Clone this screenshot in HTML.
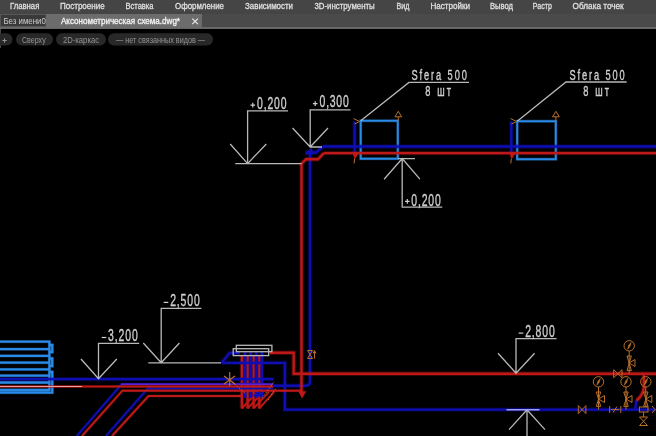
<!DOCTYPE html>
<html><head><meta charset="utf-8">
<style>
html,body{margin:0;padding:0;background:#000;width:656px;height:436px;overflow:hidden}
svg{position:absolute;left:0;top:0;display:block;will-change:transform}
text{font-family:"Liberation Sans",sans-serif}
</style></head><body>
<svg width="656" height="436" viewBox="0 0 656 436">
<rect x="0" y="0" width="656" height="436" fill="#000"/>
<rect x="0" y="0" width="656" height="14" fill="#454545"/>
<text stroke="#e0e0e0" stroke-width="0.3" x="10" y="9.0" font-size="9.6" fill="#e0e0e0" textLength="29.3" lengthAdjust="spacingAndGlyphs">Главная</text>
<text stroke="#e0e0e0" stroke-width="0.3" x="60" y="9.0" font-size="9.6" fill="#e0e0e0" textLength="44.6" lengthAdjust="spacingAndGlyphs">Построение</text>
<text stroke="#e0e0e0" stroke-width="0.3" x="125.5" y="9.0" font-size="9.6" fill="#e0e0e0" textLength="28.0" lengthAdjust="spacingAndGlyphs">Вставка</text>
<text stroke="#e0e0e0" stroke-width="0.3" x="175" y="9.0" font-size="9.6" fill="#e0e0e0" textLength="49.0" lengthAdjust="spacingAndGlyphs">Оформление</text>
<text stroke="#e0e0e0" stroke-width="0.3" x="245" y="9.0" font-size="9.6" fill="#e0e0e0" textLength="48.0" lengthAdjust="spacingAndGlyphs">Зависимости</text>
<text stroke="#e0e0e0" stroke-width="0.3" x="314.5" y="9.0" font-size="9.6" fill="#e0e0e0" textLength="60.2" lengthAdjust="spacingAndGlyphs">3D-инструменты</text>
<text stroke="#e0e0e0" stroke-width="0.3" x="396.6" y="9.0" font-size="9.6" fill="#e0e0e0" textLength="12.8" lengthAdjust="spacingAndGlyphs">Вид</text>
<text stroke="#e0e0e0" stroke-width="0.3" x="430.4" y="9.0" font-size="9.6" fill="#e0e0e0" textLength="39.6" lengthAdjust="spacingAndGlyphs">Настройки</text>
<text stroke="#e0e0e0" stroke-width="0.3" x="490" y="9.0" font-size="9.6" fill="#e0e0e0" textLength="23.0" lengthAdjust="spacingAndGlyphs">Вывод</text>
<text stroke="#e0e0e0" stroke-width="0.3" x="532.8" y="9.0" font-size="9.6" fill="#e0e0e0" textLength="19.0" lengthAdjust="spacingAndGlyphs">Растр</text>
<text stroke="#e0e0e0" stroke-width="0.3" x="572.6" y="9.0" font-size="9.6" fill="#e0e0e0" textLength="51.1" lengthAdjust="spacingAndGlyphs">Облака точек</text>
<rect x="0" y="14" width="656" height="14" fill="#4a4a4a"/>
<rect x="0.5" y="14.5" width="45.5" height="12" fill="#3a3a3a" stroke="#575757" stroke-width="1"/>
<rect x="46" y="14" width="156" height="13.2" fill="#6c6c6c"/>
<rect x="0" y="27.2" width="656" height="1.7" fill="#727272"/>
<text x="3.4" y="24.1" font-size="8.4" fill="#cccccc" textLength="42.4" lengthAdjust="spacingAndGlyphs">Без имени0</text>
<text stroke="#f0f0f0" stroke-width="0.35" x="61" y="24.2" font-size="8.5" fill="#f0f0f0" textLength="119.0" lengthAdjust="spacingAndGlyphs">Аксонометрическая схема.dwg*</text>
<path d="M192.3 18.6 L197.9 24.2 M197.9 18.6 L192.3 24.2" stroke="#e8e8e8" stroke-width="1.2" fill="none"/>
<rect x="0" y="29" width="1" height="19" fill="#484848"/>
<rect x="-8" y="33.3" width="20.5" height="12.2" rx="6.1" fill="#282828"/>
<rect x="16" y="33.3" width="37" height="12.2" rx="6.1" fill="#282828"/>
<rect x="56" y="33.3" width="50" height="12.2" rx="6.1" fill="#282828"/>
<rect x="108" y="33.3" width="105" height="12.2" rx="6.1" fill="#282828"/>
<path d="M2.3 40.5 H6.7 M4.5 38.3 V42.7" stroke="#9a9a9a" stroke-width="0.9" fill="none"/>
<text x="22" y="42.6" font-size="9" fill="#949494" textLength="23.7" lengthAdjust="spacingAndGlyphs">Сверху</text>
<text x="63" y="42.6" font-size="9" fill="#949494" textLength="36.0" lengthAdjust="spacingAndGlyphs">2D-каркас</text>
<text x="116" y="42.6" font-size="9" fill="#949494" textLength="89.0" lengthAdjust="spacingAndGlyphs">— нет связанных видов —</text>
<g>
<path d="M0 341.7 H49.4 M0 349.2 H49.4 M0 355.9 H49.4 M0 362.6 H49.4 M0 369.3 H49.4 M0 375.6 H49.4 M0 382.5 H49.4 M0 390 H49.4 M49.4 340.6 V391.1 M49.4 345 H52.3 V352 H49.4 M49.4 358.5 H52.3 V366 H49.4 M49.4 372 H52.3 V392.6 H0" stroke="#2a8ae8" stroke-opacity="0.25" stroke-width="3.3" fill="none"/><path d="M0 341.7 H49.4 M0 349.2 H49.4 M0 355.9 H49.4 M0 362.6 H49.4 M0 369.3 H49.4 M0 375.6 H49.4 M0 382.5 H49.4 M0 390 H49.4 M49.4 340.6 V391.1 M49.4 345 H52.3 V352 H49.4 M49.4 358.5 H52.3 V366 H49.4 M49.4 372 H52.3 V392.6 H0" stroke="#2a8ae8" stroke-width="2.3" fill="none"/>
<path d="M360.7 120.8 H397.8 V158.7 H360.7 Z M517.2 121.2 H555.8 V159.2 H517.2 Z" stroke="#2a8ae8" stroke-opacity="0.25" stroke-width="3.2" fill="none"/><path d="M360.7 120.8 H397.8 V158.7 H360.7 Z M517.2 121.2 H555.8 V159.2 H517.2 Z" stroke="#2a8ae8" stroke-width="2" fill="none"/>
<path d="M241.9 355 V408.4 M247.6 355 V408.4 M253.6 355 V408.4 M259.3 355 V408.4" stroke="#bf1818" stroke-opacity="0.3" stroke-width="4.4" fill="none"/><path d="M241.9 355 V408.4 M247.6 355 V408.4 M253.6 355 V408.4 M259.3 355 V408.4" stroke="#bf1818" stroke-width="2.4" fill="none"/>
<path d="M241.9 408.4 L257 392 M247.6 408.4 L263 392 M253.6 408.4 L269 392 M259.3 408.4 L274 392" stroke="#bf1818" stroke-opacity="0.25" stroke-width="2.8" fill="none"/><path d="M241.9 408.4 L257 392 M247.6 408.4 L263 392 M253.6 408.4 L269 392 M259.3 408.4 L274 392" stroke="#bf1818" stroke-width="1.8" fill="none"/>
<path d="M0 379.1 H273.5 M323 146.5 H656 M305.5 152.5 H316 L323 146.5 M310 152.5 V381.5 Q310 385.7 305 385.7 H273 M221.4 362.9 L229.7 353 H240 M221.4 362.9 H284.8 V409.6 H656 M354.6 121.5 V153 M511.3 121.5 V153 M245 351 V398 M250.7 351 V398 M256.3 351 V398 M262 351 V398 M636.3 400 L635.5 409.6" stroke="#0e0eb4" stroke-opacity="0.3" stroke-width="4.4" fill="none"/><path d="M0 379.1 H273.5 M323 146.5 H656 M305.5 152.5 H316 L323 146.5 M310 152.5 V381.5 Q310 385.7 305 385.7 H273 M221.4 362.9 L229.7 353 H240 M221.4 362.9 H284.8 V409.6 H656 M354.6 121.5 V153 M511.3 121.5 V153 M245 351 V398 M250.7 351 V398 M256.3 351 V398 M262 351 V398 M636.3 400 L635.5 409.6" stroke="#0e0eb4" stroke-width="2.4" fill="none"/>
<path d="M76.8 436 L121.7 384 H273 M106 436 L147.7 388.6 H273" stroke="#0e0eb4" stroke-opacity="0.25" stroke-width="3.2" fill="none"/><path d="M76.8 436 L121.7 384 H273 M106 436 L147.7 388.6 H273" stroke="#0e0eb4" stroke-width="2.0" fill="none"/>
<path d="M323.8 153.1 H656 M323.8 153.1 L318 159.3 H306 L301.5 163.7 V392 M270 352.8 H293.7 V373.7 H656 M643.8 373.7 V388 Q643 395 636.5 400.5" stroke="#bf1818" stroke-opacity="0.3" stroke-width="4.4" fill="none"/><path d="M323.8 153.1 H656 M323.8 153.1 L318 159.3 H306 L301.5 163.7 V392 M270 352.8 H293.7 V373.7 H656 M643.8 373.7 V388 Q643 395 636.5 400.5" stroke="#bf1818" stroke-width="2.4" fill="none"/>
<path d="M0 386.5 H273 M82 436 L122.4 390.7 H301.5 M112 436 L148.5 396 H241.4" stroke="#bf1818" stroke-opacity="0.25" stroke-width="3.2" fill="none"/><path d="M0 386.5 H273 M82 436 L122.4 390.7 H301.5 M112 436 L148.5 396 H241.4" stroke="#bf1818" stroke-width="2.0" fill="none"/>
<path d="M298.3 391.3 H306.3 L302 398.5 Z M352.5 152 H359.5 L354.6 159.8 Z M509.3 152 H516.3 L511.3 159.8 Z" fill="#bf1818"/>
<path d="M304.5 154.5 L311.5 147.5 L314 154.5 Z M252 396 L260 391 L262 397 Z" fill="#0e0eb4"/>
<path d="M121 384.3 H273" stroke="#6a20c8" stroke-width="1.6" fill="none"/>
<path d="M0 386.5 H82" stroke="#f4b0b0" stroke-width="0.9" fill="none"/>
<g stroke="#b8b8b8" stroke-width="1.3" fill="none"><path d="M81 359 L98.5 378.8 L116.8 359 M98.5 378.8 V343.4 H139.2"/><path d="M143.3 343 L161.2 362.8 L179.4 343 M161.2 362.8 V308.3 H201.4 M148.3 362.8 H221"/><path d="M230.2 144 L247.6 163.6 L266.3 144 M247.6 163.6 V110.8 H288 M235.3 163.6 H301.5"/><path d="M292.5 128 L310.2 147 L328 128 M310.2 147 V109.9 H350.6 M310.2 147 H322"/><path d="M384.1 179.2 L402.2 158.6 L419.9 179.2 M402.2 158.6 V207.2 H442.3 M398 158.6 H415"/><path d="M498 353.2 L516 373.2 L534.6 353.2 M516 373.2 V338.7 H556.6"/><path d="M509 429.6 L527 409.7 L545 429.6 M527 409.7 V436"/><path d="M360.7 120.8 L408.9 82.4 H469"/><path d="M517.2 121.2 L566 82 H626.6"/><rect x="236.3" y="345.3" width="35.6" height="6.4"/><rect x="233.2" y="348.7" width="35.5" height="6.9"/></g>
<path d="M506.5 409.7 H539.5" stroke="#a0a0f0" stroke-width="1.5" fill="none"/>
<g transform="translate(256.99,109) scale(0.64,1)"><text x="0" y="0" font-size="16.3" letter-spacing="1.371" fill="#d0d0d0" stroke="#d0d0d0" stroke-width="0.35">0,200</text></g>
<path d="M250.5 105.1 H255.10000000000002 M252.8 102.8 V107.39999999999999" stroke="#d0d0d0" stroke-width="1.2" fill="none"/>
<g transform="translate(319.59,107.4) scale(0.64,1)"><text x="0" y="0" font-size="16.3" letter-spacing="1.176" fill="#d0d0d0" stroke="#d0d0d0" stroke-width="0.35">0,300</text></g>
<path d="M312.9 103.6 H317.5 M315.2 101.3 V105.89999999999999" stroke="#d0d0d0" stroke-width="1.2" fill="none"/>
<g transform="translate(411.29,205.8) scale(0.64,1)"><text x="0" y="0" font-size="16.3" letter-spacing="1.293" fill="#d0d0d0" stroke="#d0d0d0" stroke-width="0.35">0,200</text></g>
<path d="M405.0 201.4 H409.6 M407.3 199.1 V203.70000000000002" stroke="#d0d0d0" stroke-width="1.2" fill="none"/>
<g transform="translate(108.00,341.4) scale(0.64,1)"><text x="0" y="0" font-size="16.3" letter-spacing="1.406" fill="#d0d0d0" stroke="#d0d0d0" stroke-width="0.35">3,200</text></g>
<path d="M101.7 337.5 H106.3" stroke="#d0d0d0" stroke-width="1.2" fill="none"/>
<g transform="translate(170.18,306.1) scale(0.64,1)"><text x="0" y="0" font-size="16.3" letter-spacing="1.339" fill="#d0d0d0" stroke="#d0d0d0" stroke-width="0.35">2,500</text></g>
<path d="M163.7 302.4 H168.3" stroke="#d0d0d0" stroke-width="1.2" fill="none"/>
<g transform="translate(525.18,336.8) scale(0.64,1)"><text x="0" y="0" font-size="16.3" letter-spacing="1.339" fill="#d0d0d0" stroke="#d0d0d0" stroke-width="0.35">2,800</text></g>
<path d="M518.7 333.1 H523.3" stroke="#d0d0d0" stroke-width="1.2" fill="none"/>
<g transform="translate(411.48,79.7) scale(0.66,1)"><text x="0" y="0" font-size="14" letter-spacing="2.900" fill="#d0d0d0" stroke="#d0d0d0" stroke-width="0.35">Sfera 500</text></g>
<g transform="translate(425.20,95.8) scale(0.66,1)"><text x="0" y="0" font-size="14" letter-spacing="3.287" fill="#d0d0d0" stroke="#d0d0d0" stroke-width="0.35">8 шт</text></g>
<g transform="translate(569.38,79.7) scale(0.66,1)"><text x="0" y="0" font-size="14" letter-spacing="2.900" fill="#d0d0d0" stroke="#d0d0d0" stroke-width="0.35">Sfera 500</text></g>
<g transform="translate(583.20,95.8) scale(0.66,1)"><text x="0" y="0" font-size="14" letter-spacing="3.287" fill="#d0d0d0" stroke="#d0d0d0" stroke-width="0.35">8 шт</text></g>
<g stroke="#b8702a" stroke-width="1" fill="none"><path d="M394.9 116.8 L398.3 111.3 L401.7 116.8 Z M398.3 116.8 V120.8"/><path d="M552.5 116.8 L555.9 111.3 L559.3 116.8 Z M555.9 116.8 V121.2"/><path d="M353.5 118.5 L359.5 121.5 L354.5 124 M354.6 159 L354 163.5"/><path d="M510.5 118.5 L516.5 121.5 L511.5 124 M511.3 159 L510.8 163.5"/><circle cx="629.2" cy="345.8" r="5.2"/><circle cx="598.5" cy="381.8" r="5.2"/><circle cx="626" cy="381.8" r="5.2"/><circle cx="645.8" cy="381.8" r="5.2"/><path d="M627.6 349.2 L628.7 345.2 L631.1 342.4 L630.0 346.4 Z M596.8 385.2 L597.9 381.2 L600.3 378.4 L599.2 382.4 Z M624.3 385.2 L625.4 381.2 L627.8 378.4 L626.7 382.4 Z M644.1 385.2 L645.2 381.2 L647.6 378.4 L646.5 382.4 Z" fill="#b8702a" stroke-width="0.6"/><path d="M629.2 351 V373.7 M627 356 H631.4 L627 370.6 H631.4 Z M629.2 363 L635 359.5 V366.5 Z"/><path d="M598.5 387 V409.6 M596.3 392 H600.7 L596.3 406.4 H600.7 Z M598.5 399 L604.5 395.5 V402.5 Z"/><path d="M626 387 V409.6 M623.8 392 H628.2 L623.8 406.4 H628.2 Z M626 399 L632 395.5 V402.5 Z"/><path d="M645.8 387 V407 M643.6 392 H648 L643.6 406.4 H648 Z M645.8 399 L651.8 395.5 V402.5 Z"/><path d="M613.7 369.7 L622 377.7 V369.7 L613.7 377.7 Z"/><path d="M578.3 405.6 L585.9 413.6 V405.6 L578.3 413.6 Z"/><path d="M609.7 406 V413 M620.8 406 V413 M611 409.6 H619.5 M613 412.5 L617 406.5"/><rect x="639.4" y="407" width="8.6" height="5"/><path d="M643.6 412 V417 M639.5 417 H647.5 L639.5 425.5 H647.5 Z"/><path d="M652 406 L655 409.6 L652 413"/><path d="M307.5 350.5 L312.5 358.5 M307.5 358.5 L312.5 350.5 M307.5 350.5 H312.5 M307.5 358.5 H312.5 M314.5 351.5 V358.5 M313 353.5 L314.5 350.5 L316 353.5"/><path d="M224 376 L235 384 M235 376 L224 384 M229.7 372 V386" stroke-width="1.2"/><path d="M230 380 L246 394 M262 398 L274 382 M268 400 L276 388" stroke-dasharray="1.5 1.5"/></g>
</g>
</svg>
</body></html>
